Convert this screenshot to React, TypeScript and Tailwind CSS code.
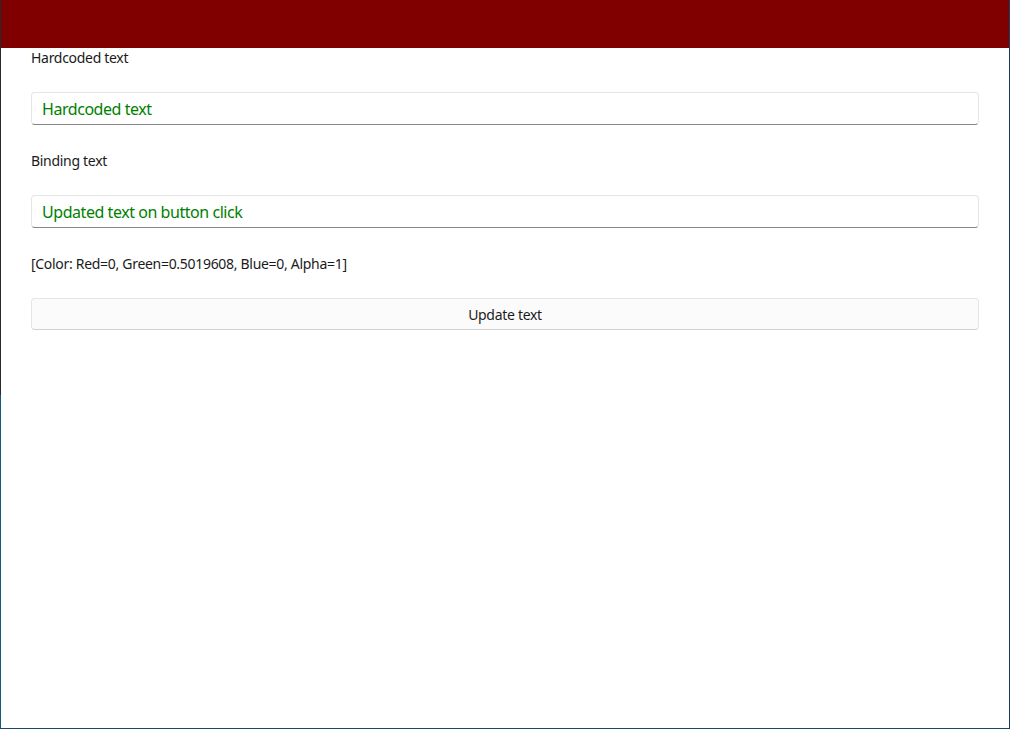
import React from "react";

export default function App() {
  const font = { fontFamily: '"Noto Sans", "Open Sans", sans-serif' };
  return (
    <div className="w-[1010px] h-[729px] flex bg-white overflow-hidden" style={font}>
      <div className="w-px flex flex-col shrink-0">
        <div className="h-[395px] bg-[#262a2e]" />
        <div className="flex-1 bg-[#0f5b78]" />
      </div>
      <div className="flex-1 flex flex-col">
        <div className="h-[48px] bg-[#800000] shrink-0" />
        <div className="flex-1 flex flex-col px-[30px] text-[14px] tracking-[-0.3px] text-[#1b1b1b]">
          <div className="h-[20px] leading-[20px]">Hardcoded text</div>
          <div className="mt-6 h-[33px] rounded-[4px] border border-[#e5e5e5] border-b-[#868686] bg-white pl-[10px] flex items-center text-[16px] tracking-[-0.45px] text-[#008000]">
            Hardcoded text
          </div>
          <div className="mt-[26px] h-[20px] leading-[20px]">Binding text</div>
          <div className="mt-6 h-[33px] rounded-[4px] border border-[#e5e5e5] border-b-[#868686] bg-white pl-[10px] flex items-center text-[16px] tracking-[-0.45px] text-[#008000]">
            Updated text on button click
          </div>
          <div className="mt-[26px] h-[20px] leading-[20px]">[Color: Red=0, Green=0.5019608, Blue=0, Alpha=1]</div>
          <div className="mt-6 h-[32px] rounded-[4px] border border-[#e5e5e5] border-b-[#d2d2d2] bg-[#fbfbfb] flex items-center justify-center">
            Update text
          </div>
        </div>
        <div className="h-px bg-[#164a68] shrink-0" />
      </div>
      <div className="w-px bg-[#1b3a5c] shrink-0" />
    </div>
  );
}
